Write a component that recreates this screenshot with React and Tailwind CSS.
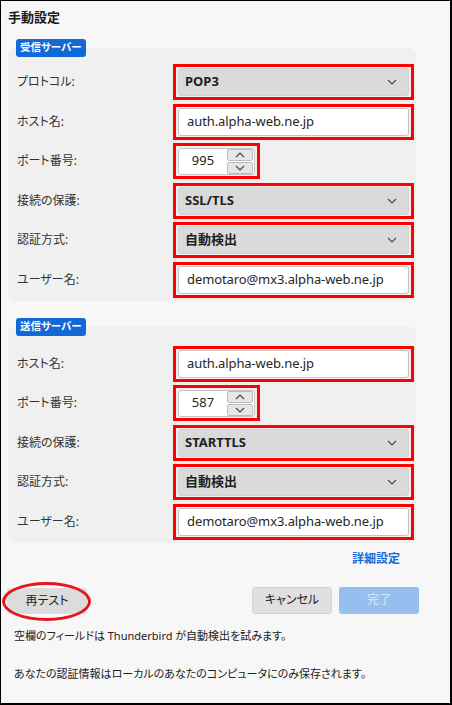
import React from "react";

const font = "[font-family:'Noto_Sans','Noto_Sans_CJK_JP',sans-serif] [font-feature-settings:'palt']";

const Chevron = ({ up }) => (
  <svg width="10" height="6" viewBox="0 0 10 6" fill="none">
    <path d={up ? "M1 5 L5 1 L9 5" : "M1 1 L5 5 L9 1"} stroke="#4a4a4a" strokeWidth="1.2" />
  </svg>
);

// red annotation frame around a control
const Mark = ({ w = "w-[241px]", children }) => (
  <div className={`${w} h-[36px] border-[3px] border-[#ff0000] px-[2px] py-[1px] flex items-center`}>
    {children}
  </div>
);

const Select = ({ value }) => (
  <Mark>
    <div className="w-full h-[28px] bg-[#dadada] border border-[#d2d2d2] rounded-[3px] flex items-center justify-between pl-[6px] pr-[11px]">
      <span className="text-[13px] font-bold text-[#1e1e1e]">{value}</span>
      <Chevron />
    </div>
  </Mark>
);

const Input = ({ value }) => (
  <Mark>
    <div className="w-full h-[28px] bg-white border border-[#c4c4c4] rounded-[3px] flex items-center pl-[8px]">
      <span className="text-[13px] tracking-[-0.1px] text-[#262626]">{value}</span>
    </div>
  </Mark>
);

const Port = ({ value }) => (
  <Mark w="w-[87px]">
    <div className="w-full h-[27px] bg-white border border-[#c4c4c4] rounded-[3px] flex items-center">
      <span className="flex-1 text-center text-[13px] text-[#262626]">{value}</span>
      <div className="flex flex-col gap-px mr-[1px]">
        <div className="w-[26px] h-[12px] bg-[#e6e6e6] border border-[#bdbdbd] rounded-[2px] flex items-center justify-center">
          <Chevron up />
        </div>
        <div className="w-[26px] h-[12px] bg-[#e6e6e6] border border-[#bdbdbd] rounded-[2px] flex items-center justify-center">
          <Chevron />
        </div>
      </div>
    </div>
  </Mark>
);

const Row = ({ label, children }) => (
  <div className="grid grid-cols-[156px_241px] items-center">
    <span className="text-[12px] text-[#333]">{label}</span>
    <div>{children}</div>
  </div>
);

const Badge = ({ text }) => (
  <div className="relative z-10 ml-[8px] w-fit h-[18px] px-[4px] bg-[#1269d6] rounded-[3px] flex items-center">
    <span className="text-[10.5px] font-bold text-white">{text}</span>
  </div>
);

export default function App() {
  const incoming = [
    ["プロトコル:", <Select value="POP3" />],
    ["ホスト名:", <Input value="auth.alpha-web.ne.jp" />],
    ["ポート番号:", <Port value="995" />],
    ["接続の保護:", <Select value="SSL/TLS" />],
    ["認証方式:", <Select value="自動検出" />],
    ["ユーザー名:", <Input value="demotaro@mx3.alpha-web.ne.jp" />],
  ];
  const outgoing = [
    ["ホスト名:", <Input value="auth.alpha-web.ne.jp" />],
    ["ポート番号:", <Port value="587" />],
    ["接続の保護:", <Select value="STARTTLS" />],
    ["認証方式:", <Select value="自動検出" />],
    ["ユーザー名:", <Input value="demotaro@mx3.alpha-web.ne.jp" />],
  ];

  return (
    <div className={`${font} w-[452px] h-[705px] bg-[#f7f7f7] border-t border-l border-r-2 border-b-2 border-black pl-[7px] overflow-hidden`}>
      <div className="h-[34px] flex items-center">
        <h1 className="text-[13px] font-bold text-[#1a1a1a]">手動設定</h1>
      </div>

      <div className="mt-[4px]">
        <Badge text="受信サーバー" />
        <div className="-mt-[9px] w-[408px] bg-[#f0f0f0] rounded-[6px] pl-[9px] pt-[16px] pb-[3px] flex flex-col gap-[3.5px]">
          {incoming.map(([l, c], i) => (
            <Row key={i} label={l}>{c}</Row>
          ))}
        </div>
      </div>

      <div className="mt-[17px]">
        <Badge text="送信サーバー" />
        <div className="-mt-[9px] w-[408px] bg-[#f0f0f0] rounded-[6px] pl-[9px] pt-[19px] pb-[3px] flex flex-col gap-[3.5px]">
          {outgoing.map(([l, c], i) => (
            <Row key={i} label={l}>{c}</Row>
          ))}
        </div>
      </div>

      <div className="w-[392px] mt-[7px] h-[16px] flex justify-end">
        <span className="text-[12px] font-bold text-[#1a6bd4]">詳細設定</span>
      </div>

      <div className="-ml-px mt-[21px] w-[412px] flex items-center">
        <div className="relative">
          <button className="w-[80px] h-[26px] bg-[#dcdcdc] rounded-[3px] text-[12px] text-[#222]">再テスト</button>
          <div className="absolute left-[-5px] top-[-5px] w-[89px] h-[39px] rounded-[50%] border-[3px] border-[#e8141c]" />
        </div>
        <button className="ml-auto w-[80px] h-[27px] bg-[#e0e0e0] border border-[#d4d4d4] rounded-[3px] text-[12px] text-[#222]">キャンセル</button>
        <button className="ml-[7px] w-[80px] h-[27px] bg-[#96bff0] rounded-[3px] text-[12px] text-[#dbe9fb]">完了</button>
      </div>

      <p className="mt-[14px] ml-[6px] text-[11px] leading-[16px] text-[#222]">空欄のフィールドは Thunderbird が自動検出を試みます。</p>
      <p className="mt-[22px] ml-[6px] text-[11px] leading-[16px] text-[#222]">あなたの認証情報はローカルのあなたのコンピュータにのみ保存されます。</p>
    </div>
  );
}
